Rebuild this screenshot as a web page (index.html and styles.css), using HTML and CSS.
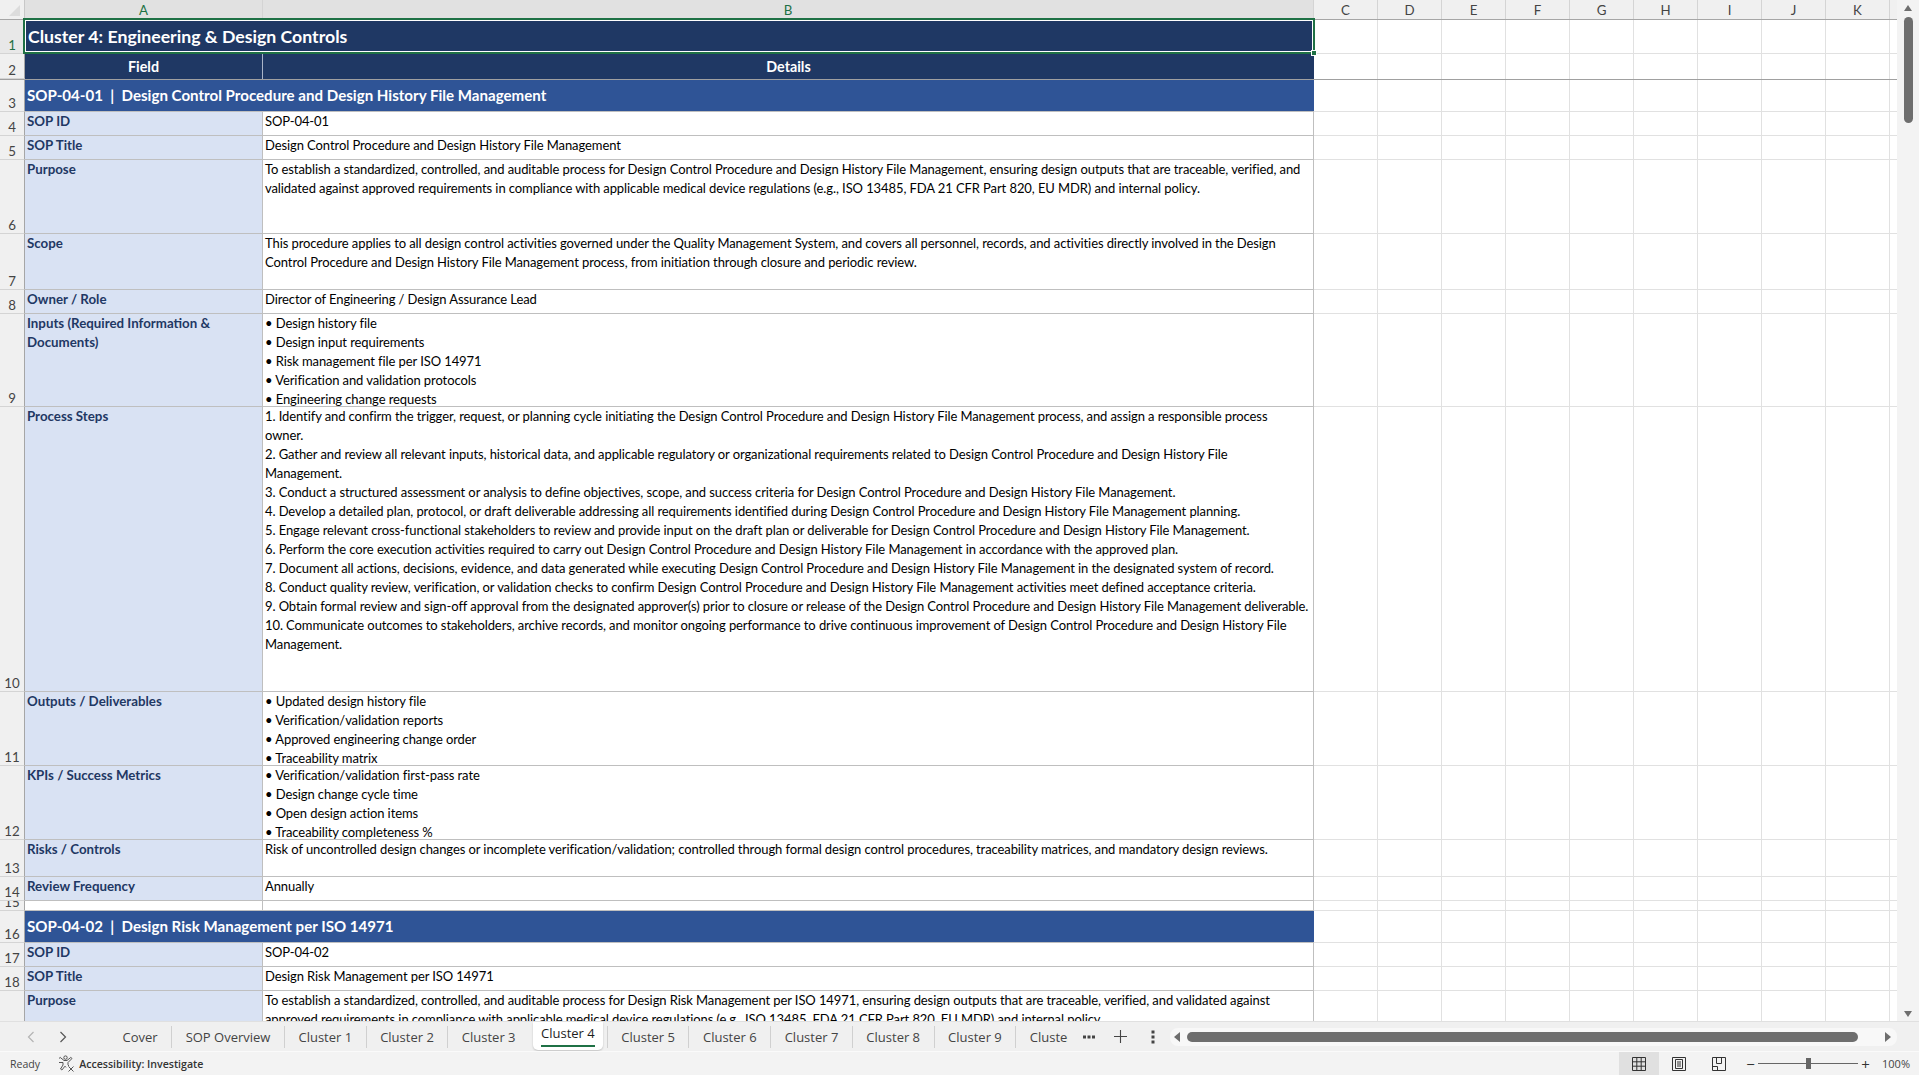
FILE: index.html
```html
<!DOCTYPE html>
<html>
<head>
  <meta charset="UTF-8">
  <title>Cluster 4 - Excel</title>
  <link rel="stylesheet" href="styles.css">
</head>
<body>
  <div class="app">
    <div class="sheet">
      <div class="grid">
        <div class="col-head">
          <div class="corner"><span class="corner-mark"></span></div>
          <div class="col col-a selected">A</div>
          <div class="col col-b selected">B</div>
          <div class="col">C</div>
          <div class="col">D</div>
          <div class="col">E</div>
          <div class="col">F</div>
          <div class="col">G</div>
          <div class="col">H</div>
          <div class="col">I</div>
          <div class="col">J</div>
          <div class="col">K</div>
          <div class="col col-l"></div>
        </div>

        <div class="rows">
          <div class="row h34">
            <div class="rh rh-selected">1</div>
            <div class="merged title">Cluster 4: Engineering &amp; Design Controls</div>
            <div class="rest"></div>
          </div>
          <div class="row h26 frozen">
            <div class="rh">2</div>
            <div class="head-a">Field</div>
            <div class="head-b">Details</div>
            <div class="rest"></div>
          </div>

          <div class="row h32">
            <div class="rh">3</div>
            <div class="merged section">SOP-04-01&nbsp; |&nbsp; Design Control Procedure and Design History File Management</div>
            <div class="rest"></div>
          </div>
          <div class="row h24">
            <div class="rh">4</div>
            <div class="label">SOP ID</div>
            <div class="value">SOP-04-01</div>
            <div class="rest"></div>
          </div>
          <div class="row h24">
            <div class="rh">5</div>
            <div class="label">SOP Title</div>
            <div class="value">Design Control Procedure and Design History File Management</div>
            <div class="rest"></div>
          </div>
          <div class="row h74">
            <div class="rh">6</div>
            <div class="label">Purpose</div>
            <div class="value">To establish a standardized, controlled, and auditable process for Design Control Procedure and Design History File Management, ensuring design outputs that are traceable, verified, and<br>validated against approved requirements in compliance with applicable medical device regulations (e.g., ISO 13485, FDA 21 CFR Part 820, EU MDR) and internal policy.</div>
            <div class="rest"></div>
          </div>
          <div class="row h56">
            <div class="rh">7</div>
            <div class="label">Scope</div>
            <div class="value">This procedure applies to all design control activities governed under the Quality Management System, and covers all personnel, records, and activities directly involved in the Design<br>Control Procedure and Design History File Management process, from initiation through closure and periodic review.</div>
            <div class="rest"></div>
          </div>
          <div class="row h24">
            <div class="rh">8</div>
            <div class="label">Owner / Role</div>
            <div class="value">Director of Engineering / Design Assurance Lead</div>
            <div class="rest"></div>
          </div>
          <div class="row h93">
            <div class="rh">9</div>
            <div class="label">Inputs (Required Information &amp;<br>Documents)</div>
            <div class="value">• Design history file<br>• Design input requirements<br>• Risk management file per ISO 14971<br>• Verification and validation protocols<br>• Engineering change requests</div>
            <div class="rest"></div>
          </div>
          <div class="row h285">
            <div class="rh">10</div>
            <div class="label">Process Steps</div>
            <div class="value">1. Identify and confirm the trigger, request, or planning cycle initiating the Design Control Procedure and Design History File Management process, and assign a responsible process<br>owner.<br>2. Gather and review all relevant inputs, historical data, and applicable regulatory or organizational requirements related to Design Control Procedure and Design History File<br>Management.<br>3. Conduct a structured assessment or analysis to define objectives, scope, and success criteria for Design Control Procedure and Design History File Management.<br>4. Develop a detailed plan, protocol, or draft deliverable addressing all requirements identified during Design Control Procedure and Design History File Management planning.<br>5. Engage relevant cross-functional stakeholders to review and provide input on the draft plan or deliverable for Design Control Procedure and Design History File Management.<br>6. Perform the core execution activities required to carry out Design Control Procedure and Design History File Management in accordance with the approved plan.<br>7. Document all actions, decisions, evidence, and data generated while executing Design Control Procedure and Design History File Management in the designated system of record.<br>8. Conduct quality review, verification, or validation checks to confirm Design Control Procedure and Design History File Management activities meet defined acceptance criteria.<br>9. Obtain formal review and sign-off approval from the designated approver(s) prior to closure or release of the Design Control Procedure and Design History File Management deliverable.<br>10. Communicate outcomes to stakeholders, archive records, and monitor ongoing performance to drive continuous improvement of Design Control Procedure and Design History File<br>Management.</div>
            <div class="rest"></div>
          </div>
          <div class="row h74">
            <div class="rh">11</div>
            <div class="label">Outputs / Deliverables</div>
            <div class="value">• Updated design history file<br>• Verification/validation reports<br>• Approved engineering change order<br>• Traceability matrix</div>
            <div class="rest"></div>
          </div>
          <div class="row h74">
            <div class="rh">12</div>
            <div class="label">KPIs / Success Metrics</div>
            <div class="value">• Verification/validation first-pass rate<br>• Design change cycle time<br>• Open design action items<br>• Traceability completeness %</div>
            <div class="rest"></div>
          </div>
          <div class="row h37">
            <div class="rh">13</div>
            <div class="label">Risks / Controls</div>
            <div class="value">Risk of uncontrolled design changes or incomplete verification/validation; controlled through formal design control procedures, traceability matrices, and mandatory design reviews.</div>
            <div class="rest"></div>
          </div>
          <div class="row h24">
            <div class="rh">14</div>
            <div class="label">Review Frequency</div>
            <div class="value">Annually</div>
            <div class="rest"></div>
          </div>
          <div class="row h10">
            <div class="rh">15</div>
            <div class="blank-a"></div>
            <div class="blank-b"></div>
            <div class="rest"></div>
          </div>

          <div class="row h32">
            <div class="rh">16</div>
            <div class="merged section">SOP-04-02&nbsp; |&nbsp; Design Risk Management per ISO 14971</div>
            <div class="rest"></div>
          </div>
          <div class="row h24">
            <div class="rh">17</div>
            <div class="label">SOP ID</div>
            <div class="value">SOP-04-02</div>
            <div class="rest"></div>
          </div>
          <div class="row h24">
            <div class="rh">18</div>
            <div class="label">SOP Title</div>
            <div class="value">Design Risk Management per ISO 14971</div>
            <div class="rest"></div>
          </div>
          <div class="row h74">
            <div class="rh">19</div>
            <div class="label">Purpose</div>
            <div class="value">To establish a standardized, controlled, and auditable process for Design Risk Management per ISO 14971, ensuring design outputs that are traceable, verified, and validated against<br>approved requirements in compliance with applicable medical device regulations (e.g., ISO 13485, FDA 21 CFR Part 820, EU MDR) and internal policy.</div>
            <div class="rest"></div>
          </div>

          <div class="selection"><span class="fill-handle"></span></div>
        </div>
      </div>

      <div class="vscroll">
        <svg class="arrow" width="10" height="8" viewBox="0 0 10 8"><path d="M5 1 9 7H1z" fill="#6e6e6e"/></svg>
        <div class="vtrack"><div class="vthumb"></div></div>
        <svg class="arrow" width="10" height="8" viewBox="0 0 10 8"><path d="M1 1h8L5 7z" fill="#6e6e6e"/></svg>
      </div>
    </div>

    <div class="tabbar">
      <div class="tab-nav">
        <svg width="8" height="12" viewBox="0 0 8 12"><path d="M6.5 1 1.5 6l5 5" fill="none" stroke="#b4b4b4" stroke-width="1.2"/></svg>
        <svg width="8" height="12" viewBox="0 0 8 12"><path d="M1.5 1l5 5-5 5" fill="none" stroke="#555" stroke-width="1.2"/></svg>
      </div>
      <div class="tabs">
        <div class="tab">Cover</div>
        <div class="tab">SOP Overview</div>
        <div class="tab">Cluster 1</div>
        <div class="tab">Cluster 2</div>
        <div class="tab no-sep">Cluster 3</div>
        <div class="tab active"><span class="active-name">Cluster 4</span></div>
        <div class="tab after-active">Cluster 5</div>
        <div class="tab">Cluster 6</div>
        <div class="tab">Cluster 7</div>
        <div class="tab">Cluster 8</div>
        <div class="tab">Cluster 9</div>
        <div class="tab no-sep">Cluster 10</div>
      </div>
      <div class="tab-tools">
        <svg width="14" height="4" viewBox="0 0 14 4"><g fill="#444"><rect x="1" y="0.5" width="3" height="3"/><rect x="5.5" y="0.5" width="3" height="3"/><rect x="10" y="0.5" width="3" height="3"/></g></svg>
        <svg width="13" height="13" viewBox="0 0 13 13"><path d="M6.5 0v13M0 6.5h13" stroke="#444" stroke-width="1.1"/></svg>
        <svg class="tab-menu" width="4" height="14" viewBox="0 0 4 14"><g fill="#444"><rect x="0.5" y="0.5" width="3" height="3"/><rect x="0.5" y="5.5" width="3" height="3"/><rect x="0.5" y="10.5" width="3" height="3"/></g></svg>
      </div>
      <div class="hscroll">
        <svg width="8" height="10" viewBox="0 0 8 10"><path d="M7 0v10L1 5z" fill="#6e6e6e"/></svg>
        <div class="hthumb"></div>
        <svg width="8" height="10" viewBox="0 0 8 10"><path d="M1 0v10l6-5z" fill="#6e6e6e"/></svg>
      </div>
    </div>

    <div class="statusbar">
      <span class="ready">Ready</span>
      <svg class="a11y" width="17" height="17" viewBox="0 0 17 17" fill="none" stroke="#444" stroke-width="0.9"><circle cx="7.5" cy="2.6" r="1.7"/><path d="M1 3.5 2.2 2.4 6 5.5h3l3.8-3.1L14 3.5 10 7.5v2.2l.9 1.5M5 7.5l-4 0M5 7.5v2.5L2.5 14l1.4 1L7 11.2l1 1.2"/><path d="M10.5 11.5l5 5M15.5 11.5l-5 5"/></svg>
      <span class="a11y-text">Accessibility: Investigate</span>
      <div class="status-right">
        <div class="view-btn on">
          <svg width="14" height="14" viewBox="0 0 14 14" fill="none" stroke="#333"><path d="M.5.5h13v13H.5zM4.8.5v13M9.2.5v13M.5 4.8h13M.5 9.2h13"/></svg>
        </div>
        <div class="view-btn">
          <svg width="14" height="14" viewBox="0 0 14 14" fill="none" stroke="#333"><path d="M.5.5h13v13H.5zM3.5 2.5h7v9h-7zM5 5h4M5 7h4M5 9h4"/></svg>
        </div>
        <div class="view-btn">
          <svg width="14" height="14" viewBox="0 0 14 14" fill="none" stroke="#333"><path d="M.5.5h13v13H.5zM4.5.5v6h5v-6M.5 9.5h5v4"/></svg>
        </div>
        <div class="zoom">
          <span class="zoom-sign">−</span>
          <div class="zoom-track"><span class="zoom-knob"></span></div>
          <span class="zoom-sign">+</span>
        </div>
        <span class="zoom-pct">100%</span>
      </div>
    </div>
  </div>
</body>
</html>
```

FILE: styles.css
```css
* {
  box-sizing: border-box;
}

body {
  margin: 0;
  background: #fff;
  font-family: 'Lato', 'Liberation Sans', sans-serif;
  font-size: 13.3px;
  color: #111;
}

.app {
  width: 1919px;
  height: 1075px;
  display: flex;
  flex-direction: column;
  overflow: hidden;
}

.sheet {
  height: 1021px;
  display: flex;
  overflow: hidden;
}

.grid {
  width: 1897px;
  overflow: hidden;
}

/* column letters */
.col-head {
  display: flex;
  height: 20px;
  background: #f0f0f0;
  border-bottom: 1px solid #a6a6a6;
}

.corner {
  width: 25px;
  position: relative;
  border-right: 1px solid #c8c8c8;
}

.corner-mark {
  position: absolute;
  right: 4px;
  bottom: 3px;
  border-style: solid;
  border-width: 0 0 11px 11px;
  border-color: transparent transparent #dcdcdc transparent;
}

.col {
  width: 64px;
  text-align: center;
  line-height: 21px;
  color: #444;
  border-right: 1px solid #d4d4d4;
}

.col-a {
  width: 238px;
}

.col-b {
  width: 1051px;
}

.col-l {
  width: 7px;
  border-right: 0;
}

.selected {
  background: #e1e1e1;
  color: #1f7145;
}

/* rows */
.rows {
  position: relative;
}

.row {
  display: flex;
  overflow: hidden;
}

.h10 { height: 10px; }
.h24 { height: 24px; }
.h26 { height: 26px; }
.h32 { height: 32px; }
.h34 { height: 34px; }
.h37 { height: 37px; }
.h56 { height: 56px; }
.h74 { height: 74px; }
.h93 { height: 93px; }
.h285 { height: 285px; }

.rh {
  flex: none;
  width: 25px;
  display: flex;
  align-items: flex-end;
  justify-content: center;
  background: #f0f0f0;
  color: #444;
  line-height: 16px;
  border-right: 1px solid #a6a6a6;
  border-bottom: 1px solid #d4d4d4;
}

.rh-selected {
  background: #e8e8e8;
  color: #1f7145;
}

.merged {
  flex: none;
  width: 1289px;
  padding-left: 2px;
  white-space: nowrap;
  color: #fff;
  font-weight: 700;
}

.title {
  background: #1f3864;
  font-size: 17.7px;
  line-height: 34px;
  padding-left: 3px;
}

.section {
  background: #2f5496;
  font-size: 15.1px;
  line-height: 31px;
  border-bottom: 1px solid #bfbfbf;
}

.head-a,
.head-b {
  flex: none;
  background: #1f3864;
  color: #fff;
  font-size: 14.3px;
  font-weight: 700;
  text-align: center;
  line-height: 26px;
  border-right: 1px solid #a9b4c8;
}

.head-a {
  width: 238px;
}

.head-b {
  width: 1051px;
  border-right: 0;
}

.frozen {
  border-bottom: 1px solid #a0a0a0;
}

.label,
.blank-a {
  flex: none;
  width: 238px;
  padding: 0 2px;
  background: #d9e2f3;
  color: #1f3864;
  font-weight: 700;
  line-height: 19px;
  border-right: 1px solid #bfbfbf;
  border-bottom: 1px solid #bfbfbf;
  overflow: hidden;
}

.value,
.blank-b {
  flex: none;
  width: 1051px;
  padding: 0 2px;
  background: #fff;
  color: #000;
  font-size: 13px;
  letter-spacing: -0.09px;
  line-height: 19px;
  white-space: nowrap;
  border-right: 1px solid #bfbfbf;
  border-bottom: 1px solid #bfbfbf;
  overflow: hidden;
}

.blank-a {
  background: #fff;
}

.rest {
  flex: 1;
  background-image: repeating-linear-gradient(to right, transparent 0 63px, #e1e1e1 63px 64px);
  border-bottom: 1px solid #e1e1e1;
}

.frozen .rest {
  border-bottom: 0;
}

.selection {
  position: absolute;
  left: 23px;
  top: -2px;
  width: 1292px;
  height: 36px;
  border: 2px solid #1f7145;
  box-shadow: inset 0 0 0 1px #fff;
}

.fill-handle {
  position: absolute;
  right: -4px;
  bottom: -4px;
  width: 6px;
  height: 6px;
  background: #1f7145;
  border: 1px solid #fff;
}

/* scrollbars */
.vscroll {
  flex: 1;
  background: #f3f3f3;
  display: flex;
  flex-direction: column;
  align-items: center;
  padding: 4px 0 3px;
}

.vtrack {
  flex: 1;
  width: 100%;
  padding: 5px 6px 0 7px;
}

.vthumb {
  height: 106px;
  background: #6e6e6e;
  border-radius: 5px;
}

.tabbar {
  height: 31px;
  display: flex;
  align-items: center;
  background: #f0f0f0;
  border-top: 1px solid #e0e0e0;
  border-bottom: 1px solid #fafafa;
  font-family: 'Open Sans', 'Liberation Sans', sans-serif;
  font-size: 13px;
  color: #444;
}

.tab-nav {
  width: 109px;
  display: flex;
  gap: 24px;
  padding-left: 27px;
}

.tabs {
  width: 959px;
  height: 100%;
  display: flex;
  align-items: center;
  overflow: hidden;
}

.tab {
  flex: none;
  height: 22px;
  line-height: 23px;
  padding: 0 13.5px;
  border-right: 1px solid #d0d0d0;
  white-space: nowrap;
}

.no-sep {
  border-right: 0;
}

.active {
  height: 28px;
  align-self: flex-start;
  margin: 0 4px 0 4px;
  padding: 0 8px;
  background: #fff;
  border-right: 0;
  border-radius: 0 0 5px 5px;
  box-shadow: 0 1px 2px rgba(0,0,0,0.2);
  color: #1e1e1e;
}

.active-name {
  display: block;
  height: 25px;
  line-height: 23px;
  border-bottom: 2px solid #1f7145;
}

.after-active {
  border-left: 1px solid #d0d0d0;
}

.tab-tools {
  width: 102px;
  display: flex;
  align-items: center;
  gap: 18px;
  padding-left: 14px;
}

.tab-menu {
  margin-left: 6px;
}

.hscroll {
  flex: 1;
  height: 18px;
  margin-right: 22px;
  display: flex;
  align-items: center;
  background: #f8f8f8;
  border-radius: 8px;
  padding: 0 5px 0 3px;
}

.hthumb {
  flex: 1;
  height: 10px;
  margin: 0 26px 0 6px;
  background: #6e6e6e;
  border-radius: 5px;
}

/* status bar */
.statusbar {
  flex: 1;
  display: flex;
  align-items: center;
  background: #f3f3f3;
  font-family: 'Open Sans', 'Liberation Sans', sans-serif;
  font-size: 10.6px;
  color: #444;
  padding-left: 10px;
}

.a11y {
  margin-left: 18px;
}

.a11y-text {
  margin-left: 4px;
  font-weight: 600;
  color: #333;
}

.status-right {
  margin-left: auto;
  height: 100%;
  display: flex;
  align-items: center;
}

.view-btn {
  width: 40px;
  height: 100%;
  display: flex;
  align-items: center;
  justify-content: center;
}

.view-btn.on {
  background: #e0e0e0;
}

.zoom {
  width: 130px;
  margin-left: 4px;
  display: flex;
  align-items: center;
}

.zoom-sign {
  width: 15px;
  text-align: center;
  font-size: 15px;
  color: #333;
}

.zoom-track {
  flex: 1;
  height: 1px;
  background: #666;
  position: relative;
}

.zoom-knob {
  position: absolute;
  left: 48px;
  top: -5px;
  width: 5px;
  height: 11px;
  background: #666;
}

.zoom-pct {
  width: 46px;
  text-align: right;
  padding-right: 9px;
  font-size: 11px;
}
```
